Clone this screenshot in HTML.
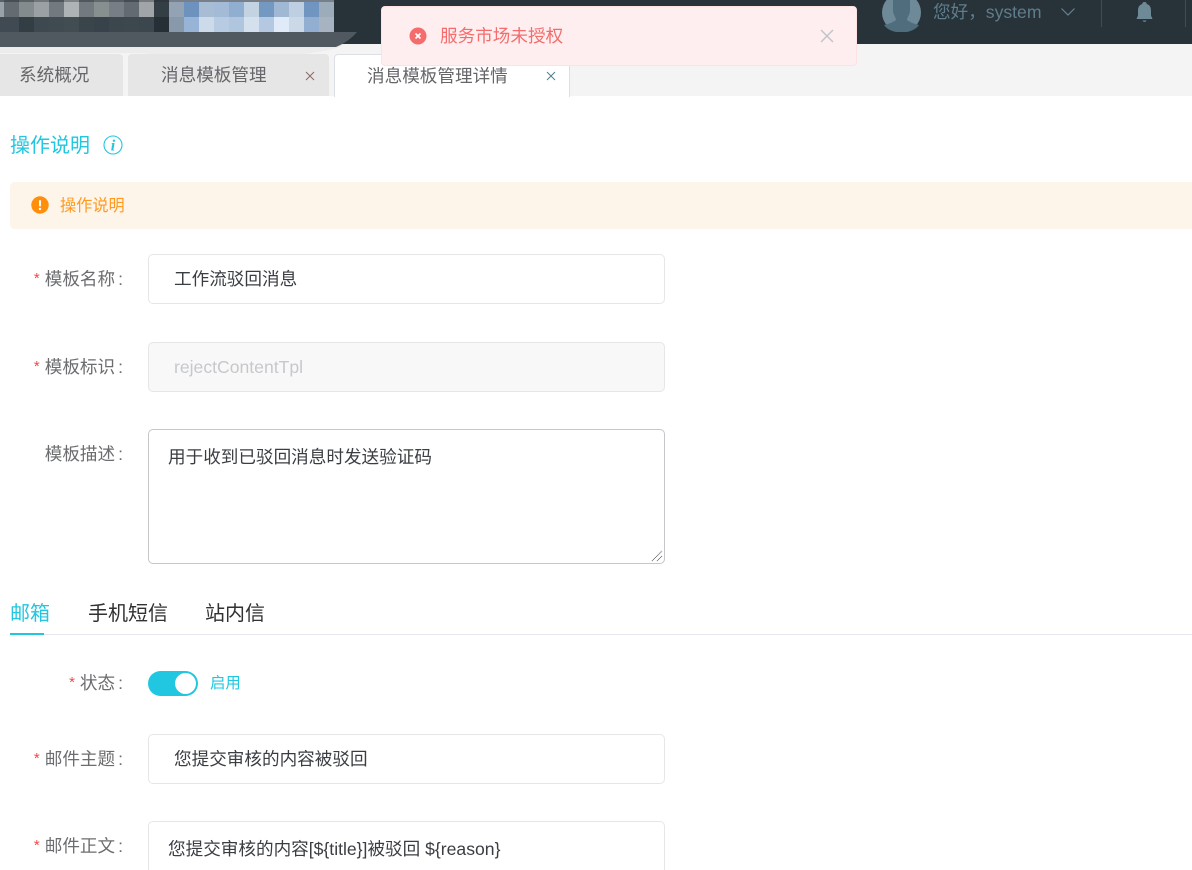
<!DOCTYPE html>
<html lang="zh-CN"><head><meta charset="utf-8">
<style>
html,body{margin:0;padding:0;width:1192px;height:870px;overflow:hidden;background:#fff}
body{position:relative;font-family:"Liberation Sans","Noto Sans CJK SC",sans-serif;font-size:17.6px;color:#64666a}
.a{position:absolute}
.t{position:absolute;white-space:nowrap;line-height:24px;height:24px}
.tab{position:absolute;top:54px;height:42px;background:#e6e6e6;border-radius:4px 4px 0 0}
.box{position:absolute;left:148px;width:515px;background:#fff;border:1px solid #e6e6e6;border-radius:5px}
.lab{position:absolute;right:1069px;white-space:nowrap;line-height:24px;height:24px;color:#6b6d70}
.lab i{font-style:normal;color:#f0484a;margin-right:5px;font-size:15px;position:relative;top:-2px}
.lab u{text-decoration:none;margin-left:3px}
</style></head><body>

<div class="a" style="left:0;top:0;width:1192px;height:44px;background:#283239"></div>
<div class="a" style="left:0;top:44px;width:1192px;height:52px;background:#f4f4f4"></div>
<svg class="a" style="left:0;top:44px" width="400" height="20"><path d="M0 0H345L338 4C300 14 220 17 140 9H0Z" fill="#ececec"/></svg>
<svg class="a" style="left:0;top:0" width="340" height="47" shape-rendering="crispEdges">
<rect x="0" y="0" width="4" height="2" fill="#586168"/><rect x="4" y="0" width="15" height="2" fill="#474f56"/><rect x="19" y="0" width="15" height="2" fill="#5a6266"/><rect x="34" y="0" width="15" height="2" fill="#70777b"/><rect x="49" y="0" width="15" height="2" fill="#4e565c"/><rect x="64" y="0" width="15" height="2" fill="#7d8387"/><rect x="79" y="0" width="15" height="2" fill="#50585e"/><rect x="94" y="0" width="15" height="2" fill="#62696c"/><rect x="109" y="0" width="15" height="2" fill="#555c63"/><rect x="124" y="0" width="15" height="2" fill="#454d54"/><rect x="139" y="0" width="15" height="2" fill="#767a7e"/><rect x="154" y="0" width="15" height="2" fill="#2d373d"/><rect x="169" y="0" width="165" height="2" fill="#767f8a"/>
<rect x="0" y="2" width="4" height="15" fill="#9aa2a9"/><rect x="4" y="2" width="15" height="15" fill="#646c72"/><rect x="19" y="2" width="15" height="15" fill="#838b8c"/><rect x="34" y="2" width="15" height="15" fill="#9aa0a3"/><rect x="49" y="2" width="15" height="15" fill="#72797f"/><rect x="64" y="2" width="15" height="15" fill="#aeb3b5"/><rect x="79" y="2" width="15" height="15" fill="#72797f"/><rect x="94" y="2" width="15" height="15" fill="#888f8f"/><rect x="109" y="2" width="15" height="15" fill="#777e86"/><rect x="124" y="2" width="15" height="15" fill="#636a72"/><rect x="139" y="2" width="15" height="15" fill="#a2a5a8"/><rect x="154" y="2" width="15" height="15" fill="#333e45"/><rect x="169" y="2" width="15" height="15" fill="#93a3b3"/><rect x="184" y="2" width="15" height="15" fill="#6c92bd"/><rect x="199" y="2" width="15" height="15" fill="#a8bdd4"/><rect x="214" y="2" width="15" height="15" fill="#a4bbd7"/><rect x="229" y="2" width="15" height="15" fill="#90aed0"/><rect x="244" y="2" width="15" height="15" fill="#c4d3e2"/><rect x="259" y="2" width="15" height="15" fill="#7399c3"/><rect x="274" y="2" width="15" height="15" fill="#a0b8d4"/><rect x="289" y="2" width="15" height="15" fill="#bdcfe1"/><rect x="304" y="2" width="15" height="15" fill="#6f95c0"/><rect x="319" y="2" width="15" height="15" fill="#9cacba"/>
<rect x="0" y="17" width="4" height="15" fill="#3f4a52"/><rect x="4" y="17" width="15" height="15" fill="#3f4a52"/><rect x="19" y="17" width="15" height="15" fill="#323d44"/><rect x="34" y="17" width="15" height="15" fill="#3d484f"/><rect x="49" y="17" width="15" height="15" fill="#3f4a51"/><rect x="64" y="17" width="15" height="15" fill="#424d53"/><rect x="79" y="17" width="15" height="15" fill="#3a454b"/><rect x="94" y="17" width="15" height="15" fill="#37424a"/><rect x="109" y="17" width="15" height="15" fill="#3b464d"/><rect x="124" y="17" width="15" height="15" fill="#3d484e"/><rect x="139" y="17" width="15" height="15" fill="#3c474d"/><rect x="154" y="17" width="15" height="15" fill="#262f35"/><rect x="169" y="17" width="15" height="15" fill="#8799ab"/><rect x="184" y="17" width="15" height="15" fill="#97b4d6"/><rect x="199" y="17" width="15" height="15" fill="#cddaea"/><rect x="214" y="17" width="15" height="15" fill="#b7cbe3"/><rect x="229" y="17" width="15" height="15" fill="#b0c6de"/><rect x="244" y="17" width="15" height="15" fill="#d5e0ee"/><rect x="259" y="17" width="15" height="15" fill="#b5c8e1"/><rect x="274" y="17" width="15" height="15" fill="#e0eaf8"/><rect x="289" y="17" width="15" height="15" fill="#cbd8e8"/><rect x="304" y="17" width="15" height="15" fill="#92aed0"/><rect x="319" y="17" width="15" height="15" fill="#a7b3c0"/>
</svg>
<svg class="a" style="left:0;top:32px" width="400" height="16"><path d="M0 0H357C351 7 345 11 336 15H0Z" fill="#50595f"/></svg>

<div class="tab" style="left:-4px;width:127px"></div>
<div class="t" style="left:19px;top:63px">系统概况</div>
<div class="tab" style="left:128px;width:201px"></div>
<div class="t" style="left:161px;top:63px">消息模板管理</div>
<svg class="a" style="left:305px;top:71px" width="10" height="10"><path d="M1 1L9 9M9 1L1 9" stroke="#8a6a66" stroke-width="1"/></svg>
<div class="tab" style="left:334px;width:234px;background:#fff;border:1px solid #dcdfe6;border-bottom:0"></div>
<div class="t" style="left:367px;top:64px">消息模板管理详情</div>
<svg class="a" style="left:546px;top:71px" width="10" height="10"><path d="M1 1L9 9M9 1L1 9" stroke="#4d7f8f" stroke-width="1"/></svg>

<svg class="a" style="left:882px;top:-7px" width="39" height="39"><circle cx="19.500" cy="19.500" r="19.500" fill="#6e8997"/><path d="M11 0H28V17C28 22 25 24 25 27C29 30 33 31 37 32C30 42 9 42 2 32C6 31 10 30 14 27C14 24 11 22 11 17Z" fill="#4f6d7c"/></svg>
<div class="t" style="left:933px;top:0;color:#5f7d8c">您好，system</div>
<svg class="a" style="left:1060px;top:7px" width="16" height="11"><path d="M1.500 1.500L8 8L14.500 1.500" fill="none" stroke="#678290" stroke-width="1.200"/></svg>
<div class="a" style="left:1101px;top:0;width:1px;height:27px;background:#3e4c55"></div>
<svg class="a" style="left:1135px;top:1px" width="19" height="22"><path d="M9.500 1C11 1 11.800 2 11.800 3C15 4 16 6.500 16 10V14.500L17.500 18H1.500L3 14.500V10C3 6.500 4 4 7.200 3C7.200 2 8 1 9.500 1Z" fill="#6f8a97"/><path d="M7.500 19.500H11.500C11 21.300 8 21.300 7.500 19.500Z" fill="#6f8a97"/></svg>
<div class="a" style="left:1185px;top:0;width:1px;height:27px;background:#3e4c55"></div>

<div class="a" style="left:381px;top:6px;width:474px;height:58px;background:#feeeef;border:1px solid #fde2e2;border-radius:4px"></div>
<svg class="a" style="left:409px;top:27px" width="18" height="18"><circle cx="9" cy="9" r="8.500" fill="#f56c6c"/><path d="M6.500 6.500L11.500 11.500M11.500 6.500L6.500 11.500" stroke="#fff" stroke-width="1.600"/></svg>
<div class="t" style="left:440px;top:24px;color:#f56c6c">服务市场未授权</div>
<svg class="a" style="left:820px;top:29px" width="14" height="14"><path d="M1 1L13 13M13 1L1 13" stroke="#c0c4cc" stroke-width="1.500"/></svg>

<div class="t" style="left:10px;top:134px;color:#21c7e0;font-size:20px">操作说明</div>
<svg class="a" style="left:103px;top:135px" width="20" height="20"><circle cx="10" cy="10" r="9" fill="none" stroke="#21c7e0" stroke-width="1.100"/><text x="10" y="15.500" text-anchor="middle" font-family="Liberation Serif" font-style="italic" font-weight="700" font-size="16" fill="#21c7e0">i</text></svg>

<div class="a" style="left:10px;top:182px;width:1190px;height:47px;background:#fdf4ea;border-radius:5px"></div>
<svg class="a" style="left:31px;top:196px" width="18" height="18"><circle cx="9" cy="9" r="8.700" fill="#ff8f0a"/><rect x="8" y="4" width="2" height="6.500" rx="1" fill="#fff"/><circle cx="9" cy="13" r="1.200" fill="#fff"/></svg>
<div class="t" style="left:60px;top:194px;color:#ff9a1f;font-size:16.200px">操作说明</div>

<div class="lab" style="top:267px"><i>*</i>模板名称<u>:</u></div>
<div class="box" style="top:254px;height:48px"></div>
<div class="t" style="left:174px;top:267px;color:#3a3d42">工作流驳回消息</div>

<div class="lab" style="top:355px"><i>*</i>模板标识<u>:</u></div>
<div class="box" style="top:342px;height:48px;background:#f8f8f8"></div>
<div class="t" style="left:174px;top:355px;color:#c6c8cc">rejectContentTpl</div>

<div class="lab" style="top:442px">模板描述<u>:</u></div>
<div class="box" style="top:429px;height:133px;border-color:#c4c6ca"></div>
<div class="t" style="left:168px;top:445px;color:#3a3d42">用于收到已驳回消息时发送验证码</div>
<svg class="a" style="left:651px;top:550px" width="12" height="12"><path d="M1 11L11 1M6 11L11 6" stroke="#666" stroke-width="1" stroke-dasharray="1 .5"/></svg>

<div class="t" style="left:10px;top:602px;color:#21c7e0;font-size:20px">邮箱</div>
<div class="t" style="left:88px;top:602px;color:#303133;font-size:20px">手机短信</div>
<div class="t" style="left:205px;top:602px;color:#303133;font-size:20px">站内信</div>
<div class="a" style="left:10px;top:634px;width:1182px;height:1px;background:#e4e7ed"></div>
<div class="a" style="left:10px;top:633px;width:34px;height:2px;background:#21c7e0"></div>

<div class="lab" style="top:671px"><i>*</i>状态<u>:</u></div>
<div class="a" style="left:148px;top:671px;width:50px;height:25px;border-radius:13px;background:#21c7e0"></div>
<div class="a" style="left:175px;top:673px;width:21px;height:21px;border-radius:50%;background:#fff"></div>
<div class="t" style="left:210px;top:672px;color:#21c7e0;font-size:15.400px">启用</div>

<div class="lab" style="top:747px"><i>*</i>邮件主题<u>:</u></div>
<div class="box" style="top:734px;height:48px"></div>
<div class="t" style="left:174px;top:747px;color:#3a3d42">您提交审核的内容被驳回</div>

<div class="lab" style="top:834px"><i>*</i>邮件正文<u>:</u></div>
<div class="box" style="top:821px;height:48px;border-bottom:0;border-radius:5px 5px 0 0"></div>
<div class="t" style="left:168px;top:837px;color:#3a3d42">您提交审核的内容[${title}]被驳回 ${reason}</div>
</body></html>
